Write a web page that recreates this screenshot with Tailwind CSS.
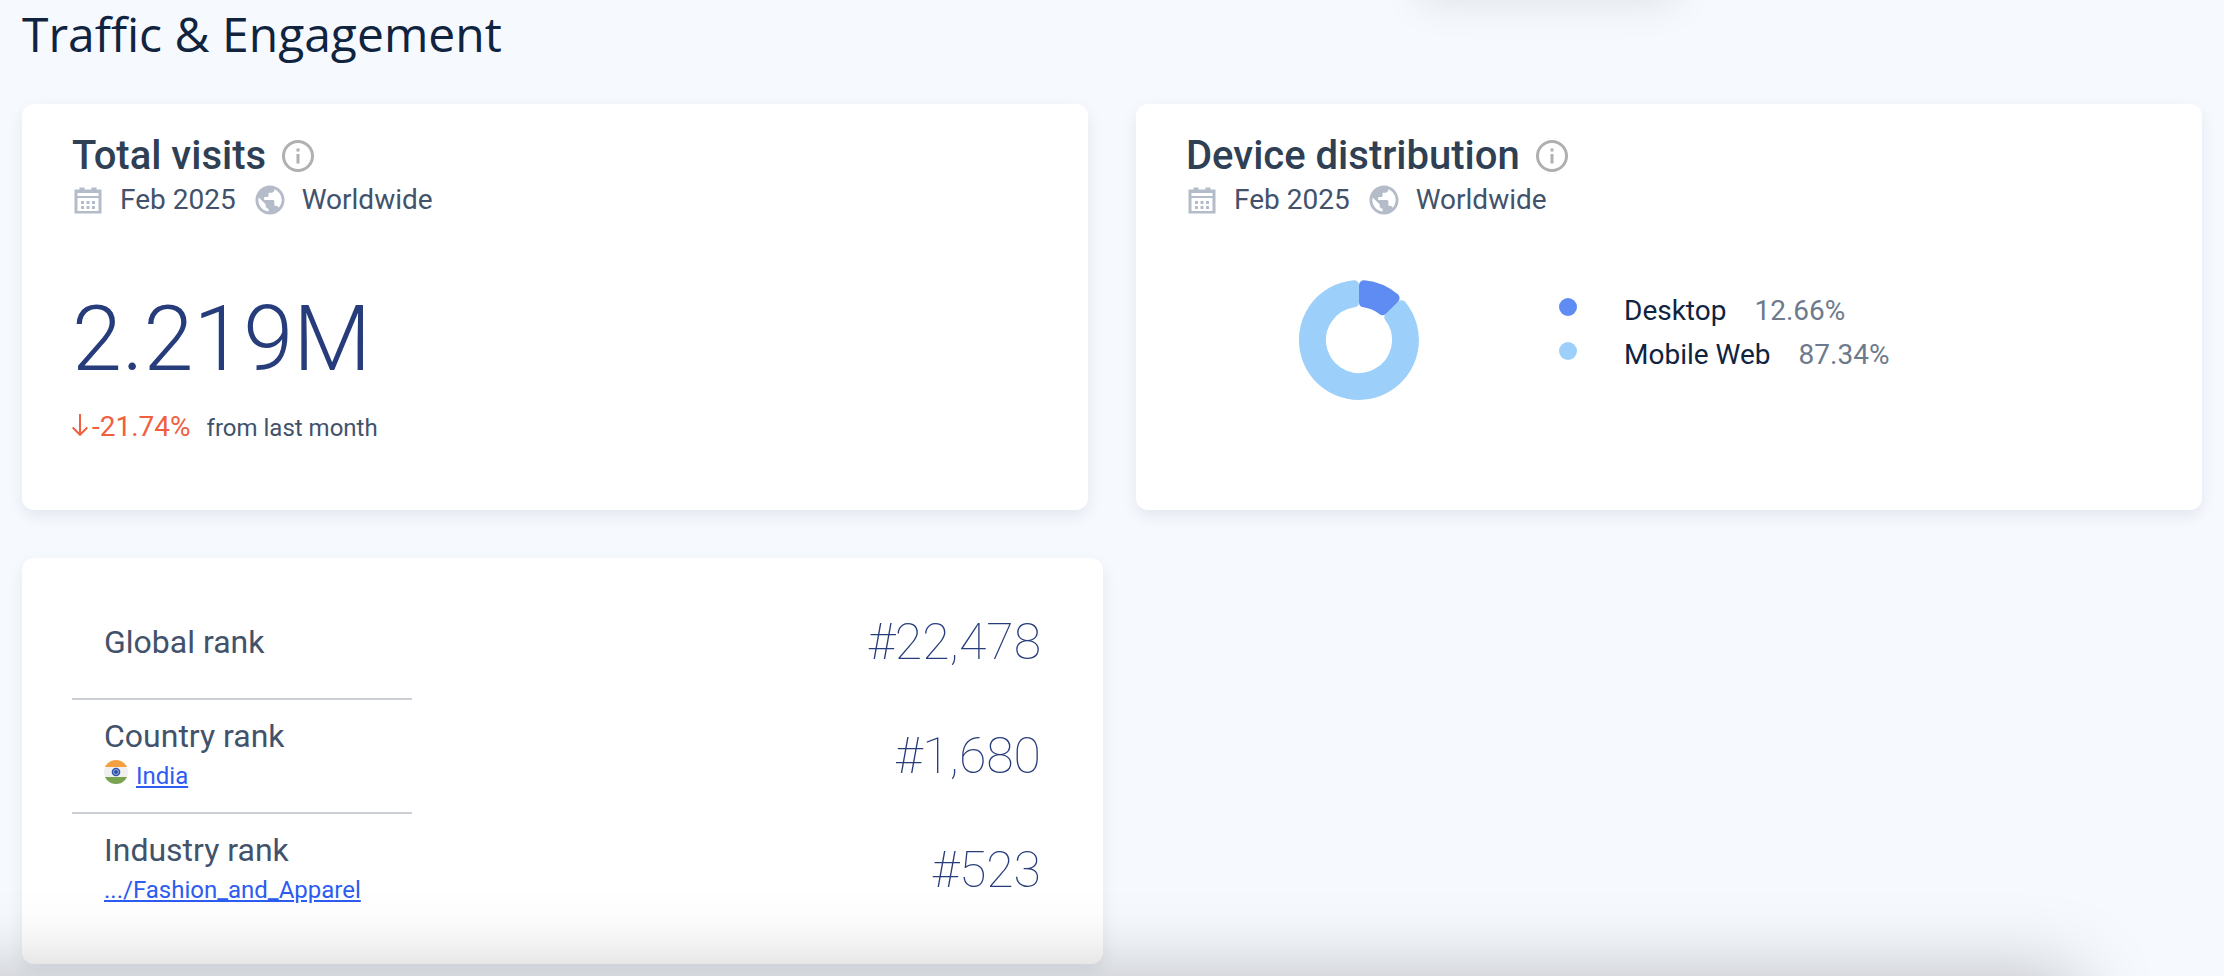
<!DOCTYPE html>
<html lang="en">
  <head>
    <meta charset="utf-8" />
    <meta content="width=device-width, initial-scale=1.0" name="viewport" />
    <title>Traffic &amp; Engagement</title>
    <script src="https://cdn.jsdelivr.net/npm/@tailwindcss/browser@4"></script>
  </head>
  <body class="bg-[#f6f9fe] font-['Roboto',sans-serif] text-[#42526b]">
    <div class="relative min-h-screen overflow-hidden px-[22px] pb-3">
      <h1 class="mb-9 text-5xl leading-[68px] font-medium text-[#10233f] font-['Open_Sans',sans-serif]">Traffic &amp; Engagement</h1>

      <main>
        <div class="grid grid-cols-2 gap-12">
          <!-- Total visits -->
          <section class="rounded-xl bg-white px-[50px] pt-8 pb-16 shadow-[0_6px_16px_rgba(14,30,50,0.08)]">
            <div class="flex items-center gap-4">
              <h2 class="text-[40px] leading-10 font-medium text-[#2f3f54]">Total visits</h2>
              <button type="button" aria-label="About total visits">
                <svg class="h-8 w-8" viewBox="0 0 32 32" fill="none">
                  <circle cx="16" cy="16" r="14.5" stroke="#b0b0b0" stroke-width="3" />
                  <path d="M14.5 8.5h3v3h-3zM14.5 14h3v9.500h-3z" fill="#b0b0b0" />
                </svg>
              </button>
            </div>
            <div class="mt-1 flex items-center gap-[18px] text-[28px] leading-10">
              <span class="flex items-center gap-4">
                <svg class="h-8 w-8" viewBox="0 0 32 32" fill="#b4bbc9">
                  <path fill-rule="evenodd" d="M2.500 5.500h5V3.500h5v2h7v-2h5v2h5v24h-27zM5.500 9v3h21V9zM5.500 14v13h21V14z" />
                  <path d="M9 17h3v3H9zM14.500 17h3v3h-3zM20 17h3v3h-3zM9 22h3v3H9zM14.500 22h3v3h-3zM20 22h3v3h-3z" />
                </svg>
                Feb 2025
              </span>
              <span class="flex items-center gap-4">
                <svg class="h-8 w-8" viewBox="1 1 22 22" fill="#b4bbc9">
                  <path d="M12 2C6.480 2 2 6.480 2 12s4.480 10 10 10 10-4.480 10-10S17.520 2 12 2zm-1 17.930c-3.950-.490-7-3.850-7-7.930 0-.620.080-1.210.210-1.790L9 15v1c0 1.100.900 2 2 2v1.930zm6.900-2.540c-.260-.810-1-1.390-1.900-1.390h-1v-3c0-.550-.450-1-1-1H8v-2h2c.550 0 1-.450 1-1V7h2c1.100 0 2-.900 2-2v-.410c2.930 1.190 5 4.060 5 7.410 0 2.080-.800 3.970-2.100 5.390z" />
                </svg>
                Worldwide
              </span>
            </div>
            <p class="mt-18 text-[90px] leading-24 font-light text-[#273c7a]">2.219M</p>
            <div class="mt-[21px] flex items-baseline gap-4 leading-9">
              <span class="flex items-baseline gap-1 text-[28px] text-[#f0603f]">
                <svg class="h-6 w-4" viewBox="0 0 16 24" fill="none" stroke="#f0603f" stroke-width="2">
                  <path d="M8 2v20.500M.700 15.500l7.300 7.300 7.300-7.300" />
                </svg>
                -21.74%
              </span>
              <span class="text-2xl leading-9">from last month</span>
            </div>
          </section>

          <!-- Device distribution -->
          <section class="rounded-xl bg-white px-[50px] pt-8 pb-16 shadow-[0_6px_16px_rgba(14,30,50,0.08)]">
            <div class="flex items-center gap-4">
              <h2 class="text-[40px] leading-10 font-medium text-[#2f3f54]">Device distribution</h2>
              <button type="button" aria-label="About device distribution">
                <svg class="h-8 w-8" viewBox="0 0 32 32" fill="none">
                  <circle cx="16" cy="16" r="14.5" stroke="#b0b0b0" stroke-width="3" />
                  <path d="M14.5 8.5h3v3h-3zM14.5 14h3v9.500h-3z" fill="#b0b0b0" />
                </svg>
              </button>
            </div>
            <div class="mt-1 flex items-center gap-[18px] text-[28px] leading-10">
              <span class="flex items-center gap-4">
                <svg class="h-8 w-8" viewBox="0 0 32 32" fill="#b4bbc9">
                  <path fill-rule="evenodd" d="M2.500 5.500h5V3.500h5v2h7v-2h5v2h5v24h-27zM5.500 9v3h21V9zM5.500 14v13h21V14z" />
                  <path d="M9 17h3v3H9zM14.500 17h3v3h-3zM20 17h3v3h-3zM9 22h3v3H9zM14.500 22h3v3h-3zM20 22h3v3h-3z" />
                </svg>
                Feb 2025
              </span>
              <span class="flex items-center gap-4">
                <svg class="h-8 w-8" viewBox="1 1 22 22" fill="#b4bbc9">
                  <path d="M12 2C6.480 2 2 6.480 2 12s4.480 10 10 10 10-4.480 10-10S17.520 2 12 2zm-1 17.930c-3.950-.490-7-3.850-7-7.930 0-.620.080-1.210.210-1.790L9 15v1c0 1.100.900 2 2 2v1.930zm6.900-2.540c-.260-.810-1-1.390-1.900-1.390h-1v-3c0-.550-.450-1-1-1H8v-2h2c.550 0 1-.450 1-1V7h2c1.100 0 2-.900 2-2v-.410c2.930 1.190 5 4.060 5 7.410 0 2.080-.800 3.970-2.100 5.390z" />
                </svg>
                Worldwide
              </span>
            </div>
            <div class="mt-15 flex items-start gap-35 pl-[113px]">
              <svg class="h-30 w-30" viewBox="0 0 120 120" stroke-width="10" stroke-linejoin="round">
                <path d="M102.600 25.300A55 55 0 1 1 55 5.200V22.300A38 38 0 1 0 90.400 37.200z" fill="#9dcffb" stroke="#9dcffb" />
                <path d="M65 5.200A55 55 0 0 1 95.600 18.100L83.400 30.100A38 38 0 0 0 65 22.300z" fill="#5f8cf3" stroke="#5f8cf3" />
              </svg>
              <ul class="mt-2 text-[28px] leading-[46px]">
                <li class="flex h-11 items-start">
                  <span class="mt-2.5 mr-[47px] size-[18px] rounded-full bg-[#5f8cf3]"></span>
                  <span class="mr-7 text-[#10233f]">Desktop</span>
                  <span class="text-[#6d7a8c]">12.66%</span>
                </li>
                <li class="flex h-11 items-start">
                  <span class="mt-2.5 mr-[47px] size-[18px] rounded-full bg-[#9dcffb]"></span>
                  <span class="mr-7 text-[#10233f]">Mobile Web</span>
                  <span class="text-[#6d7a8c]">87.34%</span>
                </li>
              </ul>
            </div>
          </section>
        </div>

        <!-- Ranks -->
        <section class="mt-12 w-[calc(50%-9px)] rounded-xl bg-white pt-7 pr-[62px] pb-9 pl-[50px] shadow-[0_6px_16px_rgba(14,30,50,0.08)]">
          <div class="flex h-[114px] justify-between">
            <div class="flex w-[340px] flex-col justify-center border-b-2 border-[#ccd0d6] px-8">
              <h3 class="text-[32px] leading-9">Global rank</h3>
            </div>
            <p class="self-center pb-0.5 text-[50px] leading-15 font-thin text-[#273c7a]">#22,478</p>
          </div>
          <div class="flex h-[114px] justify-between">
            <div class="flex w-[340px] flex-col justify-center border-b-2 border-[#ccd0d6] px-8">
              <h3 class="text-[32px] leading-9">Country rank</h3>
              <div class="mt-1.5 flex items-start gap-2 pb-1">
                <svg class="h-6 w-6" viewBox="0 0 24 24">
                  <clipPath id="flag"><circle cx="12" cy="12" r="12" /></clipPath>
                  <g clip-path="url(#flag)">
                    <path fill="#f0f0f0" d="M0 0h24v24H0z" />
                    <path fill="#f4a040" d="M0 0h24v7H0z" />
                    <path fill="#78a450" d="M0 17h24v7H0z" />
                  </g>
                  <circle cx="12" cy="12" r="4.300" fill="#2b52a8" />
                  <circle cx="12" cy="12" r="2.500" fill="none" stroke="#c8d3ea" stroke-width=".7" />
                </svg>
                <a href="#" class="pt-0.5 text-2xl leading-7 text-[#2c5cf0] underline">India</a>
              </div>
            </div>
            <p class="self-center pb-0.5 text-[50px] leading-15 font-thin text-[#273c7a]">#1,680</p>
          </div>
          <div class="flex h-[114px] justify-between">
            <div class="flex w-[340px] flex-col justify-center border-b-2 border-transparent px-8">
              <h3 class="text-[32px] leading-9">Industry rank</h3>
              <div class="mt-1.5 flex items-start gap-2 pb-1">
                <a href="#" class="pt-0.5 text-2xl leading-7 text-[#2c5cf0] underline">.../Fashion_and_Apparel</a>
              </div>
            </div>
            <p class="self-center pb-0.5 text-[50px] leading-15 font-thin text-[#273c7a]">#523</p>
          </div>
        </section>
      </main>

      <!-- Shadows of the floating bars above and below the panel -->
      <div class="pointer-events-none absolute bottom-full left-[1420px] h-20 w-64 shadow-[0_0_44px_rgba(0,0,0,0.11)]"></div>
      <div class="pointer-events-none absolute top-full right-[149px] -left-40 h-40 shadow-[0_0_80px_rgba(0,0,0,0.25)]"></div>
    </div>
  </body>
</html>
